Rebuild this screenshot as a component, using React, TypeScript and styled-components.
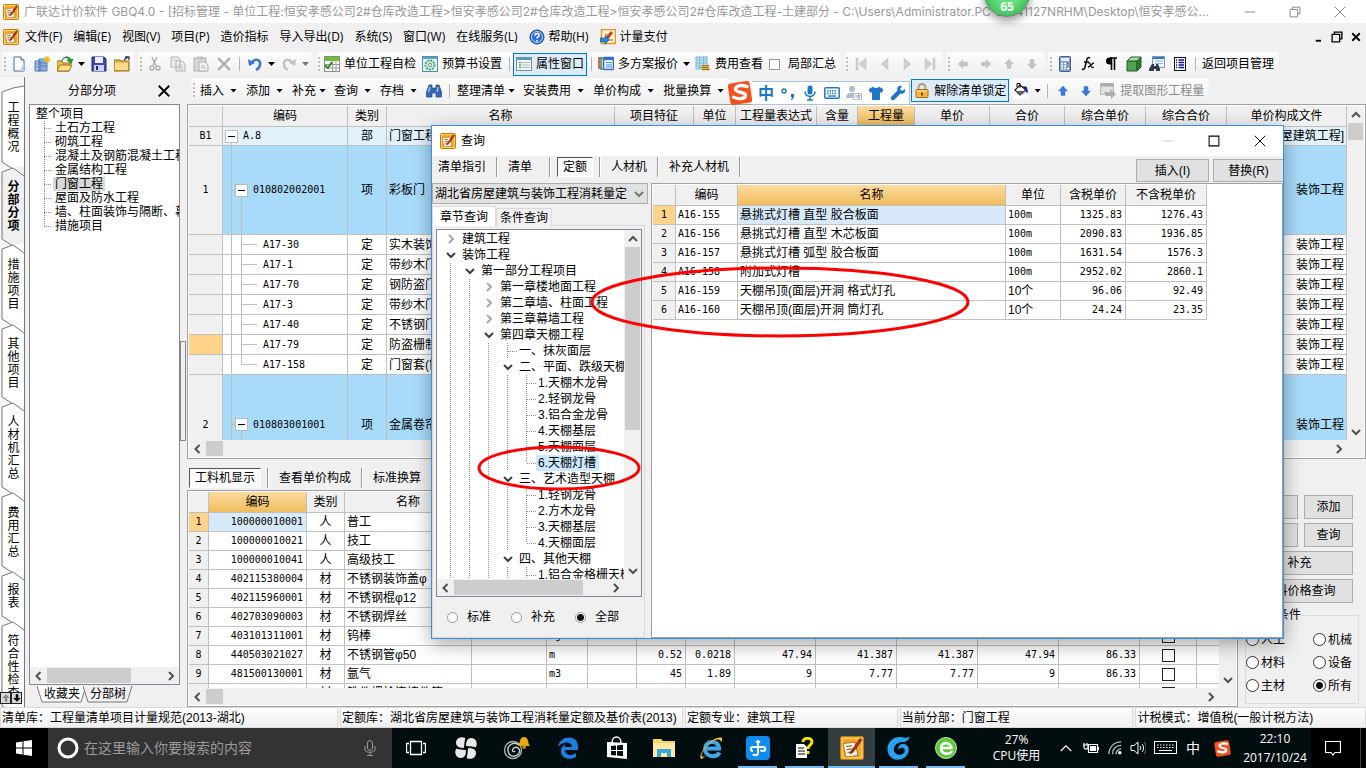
import React from "react";
import styled, { createGlobalStyle, css } from "styled-components";

const UI = '"Liberation Sans", "Noto Sans CJK SC", sans-serif';
const SYS = '"Open Sans", "Noto Sans CJK SC", sans-serif';
const MONO = '"DejaVu Sans Mono", "Noto Sans CJK SC", monospace';
const LINE = "#c0c0c0";
const FACE = "#f0f0f0";

const Global = createGlobalStyle`
  * { box-sizing: border-box; }
  body { margin: 0; overflow: hidden; background: ${FACE}; }
  button, input, select { font: inherit; color: inherit; margin: 0; padding: 0; }
  button { background: none; border: 0; white-space: nowrap; }
  svg { display: block; flex: none; }
`;

/* ---------- frame ---------- */
const Screen = styled.div`
  position: relative;
  display: flex;
  flex-direction: column;
  height: 100vh;
  min-height: 768px;
  overflow: hidden;
  background: ${FACE};
  color: #000;
  font: 12px/16px ${UI};
  white-space: nowrap;
`;
const TitleBar = styled.header`
  display: flex;
  align-items: center;
  height: 23px;
  padding: 0 20px 0 3px;
  background: #fff;
  color: #999;
  font-family: Inter, "Noto Sans CJK SC", sans-serif;
`;
const TitleText = styled.span`
  flex: 1;
  padding-left: 5px;
`;
const WindowButtons = styled.div<{ $gap: number }>`
  display: flex;
  align-items: center;
  gap: ${(p) => p.$gap}px;
`;
const MenuBar = styled.nav`
  display: flex;
  align-items: center;
  height: 28px;
  padding: 0 4px 0 3px;
  font-family: ${SYS};
`;
const MenuItem = styled.button`
  display: flex;
  align-items: center;
  gap: 4px;
  padding: 0 5px 0 6px;
`;
const Fill = styled.div`
  flex: 1;
`;

/* ---------- tool bars ---------- */
const ToolBar = styled.div`
  display: flex;
  align-items: center;
  gap: 3px;
  height: 26px;
  padding-left: 2px;
`;
const Group = styled.div`
  display: flex;
  align-items: center;
  height: 25px;
  padding-right: 2px;
  border-radius: 3px;
  background: linear-gradient(#fcfcfc, #efefef);
`;
const Grip = styled.span`
  width: 5px;
  height: 15px;
  background: repeating-linear-gradient(#bdbdbd 0 2px, transparent 2px 4px) center / 2px 100% no-repeat;
`;
const IconButton = styled.button`
  display: flex;
  justify-content: center;
  width: 23px;
`;
const TextButton = styled.button<{ $on?: boolean; $off?: boolean }>`
  display: flex;
  align-items: center;
  gap: 4px;
  height: 23px;
  padding: 0 3px;
  font-family: ${SYS};
  ${(p) => p.$on && css`background: #dcebf8; outline: 1px solid #0078d7; outline-offset: -1px;`}
  ${(p) => p.$off && css`color: #8a8a8a;`}
`;
const MenuButton = styled.button<{ $tight?: boolean }>`
  display: flex;
  align-items: center;
  justify-content: space-between;
  padding: 0 ${(p) => (p.$tight ? 4 : 5)}px 0 4px;
  gap: ${(p) => (p.$tight ? 3 : 6)}px;
  font-family: ${SYS};
`;
const Caret = styled.span`
  width: 7px;
  height: 4px;
  background: currentColor;
  clip-path: polygon(0 0, 100% 0, 50% 100%);
`;
const CaretButton = styled.button<{ $off?: boolean }>`
  display: flex;
  justify-content: center;
  width: 11px;
  color: ${(p) => (p.$off ? "#777" : "#000")};
`;
const Divider = styled.span`
  width: 8px;
  height: 14px;
  background: linear-gradient(#b5b5b5, #b5b5b5) center / 1px 100% no-repeat;
`;
const CheckLabel = styled.label`
  display: flex;
  align-items: center;
  gap: 8px;
  padding: 0 3px;
`;
const Check = styled.input.attrs({ type: "checkbox" })<{ $light?: boolean }>`
  appearance: none;
  width: ${(p) => (p.$light ? 11 : 13)}px;
  height: ${(p) => (p.$light ? 11 : 13)}px;
  border: 1px solid ${(p) => (p.$light ? "#999" : "#222")};
  background: #fff;
`;

/* ---------- left side ---------- */
const Workspace = styled.div`
  display: flex;
  flex: 1;
  min-height: 0;
`;
const SideTabs = styled.div`
  display: flex;
  flex-direction: column;
  width: 25px;
  padding-top: 11px;
  overflow: hidden;
  border-right: 1px solid #777;
  background: #f7f7f7;
`;
const SideTabButton = styled.button<{ $on?: boolean; $h: number }>`
  display: grid;
  flex: none;
  justify-items: center;
  align-items: center;
  height: ${(p) => p.$h}px;
  line-height: 13px;
  font-weight: ${(p) => (p.$on ? 700 : 400)};
  > * { grid-area: 1 / 1; }
  svg { overflow: visible; justify-self: start; }
`;
const SideTabText = styled.span`
  z-index: 1;
  width: 12px;
  margin-left: 3px;
  white-space: normal;
  word-break: break-all;
`;
const SideScroll = styled.div`
  position: absolute;
  left: 0;
  top: 692px;
  z-index: 2;
  display: flex;
  background: #d8d8d8;
`;
const SmallArrow = styled.button`
  display: flex;
  align-items: center;
  justify-content: center;
  width: 11px;
  height: 12px;
  outline: 1px solid #222;
  outline-offset: -1px;
`;
const LeftPanel = styled.aside`
  display: flex;
  flex-direction: column;
  width: 155px;
  padding-left: 4px;
`;
const PanelHead = styled.div`
  display: flex;
  align-items: center;
  height: 27px;
  padding: 0 10px 0 39px;
  justify-content: space-between;
`;
const SunkBox = styled.div`
  display: flex;
  flex-direction: column;
  flex: 1;
  min-height: 0;
  border: 1px solid #828790;
  background: #fff;
  overflow: hidden;
`;
const OutlineList = styled.ul`
  flex: 1;
  margin: 0;
  padding: 2px 0 0 6px;
  overflow: hidden;
  list-style: none;
  line-height: 14px;
`;
const OutlineItem = styled.li<{ $on?: boolean }>`
  display: flex;
  height: 14px;
  span { padding: 0 2px; margin-left: 1px; background: ${(p) => (p.$on ? "#d9d9d9" : "none")}; }
`;
const dotsV = "repeating-linear-gradient(#909090 0 1px, transparent 1px 2px)";
const dotsH = "repeating-linear-gradient(90deg, #909090 0 1px, transparent 1px 2px)";
const Branch = styled.i<{ $last?: boolean; $w: number }>`
  flex: none;
  width: ${(p) => p.$w}px;
  background:
    ${dotsV} center top / 1px ${(p) => (p.$last ? 50 : 100)}% no-repeat,
    ${dotsH} right center / 50% 1px no-repeat;
`;
const Guide = styled.i<{ $w: number }>`
  flex: none;
  width: ${(p) => p.$w}px;
  background: ${dotsV} center / 1px 100% no-repeat;
`;
const BottomTabs = styled.div`
  display: flex;
  height: 22px;
  padding-left: 8px;
`;
const BottomTab = styled.button`
  display: grid;
  height: 18px;
  margin-right: -4px;
  place-items: center;
  > * { grid-area: 1 / 1; }
`;
const Splitter = styled.div`
  display: flex;
  flex-direction: column;
  justify-content: center;
  width: 7px;
  padding-bottom: 2px;
`;
const SplitHandle = styled.span`
  width: 6px;
  height: 100px;
  border: 1px solid #828790;
`;

/* ---------- scroll bars ---------- */
const ScrollX = styled.div<{ $end?: number }>`
  display: flex;
  flex: none;
  align-items: center;
  height: 17px;
  padding-right: ${(p) => p.$end ?? 0}px;
  background: ${FACE};
`;
const ScrollY = styled.div<{ $end?: number }>`
  display: flex;
  flex: none;
  flex-direction: column;
  align-items: center;
  width: 17px;
  padding-bottom: ${(p) => p.$end ?? 0}px;
  background: ${FACE};
`;
const ArrowButton = styled.button`
  display: flex;
  flex: none;
  align-items: center;
  justify-content: center;
  width: 17px;
  height: 17px;
`;
const Thumb = styled.span<{ $w?: number; $h?: number }>`
  flex: none;
  width: ${(p) => p.$w ?? 15}px;
  height: ${(p) => p.$h ?? 15}px;
  background: #cdcdcd;
`;

/* ---------- grids ---------- */
const Content = styled.main`
  display: flex;
  flex: 1;
  flex-direction: column;
  min-width: 0;
`;
const GridFrame = styled.section<{ $grow?: boolean }>`
  display: flex;
  flex: ${(p) => (p.$grow ? 1 : "none")};
  flex-direction: column;
  min-width: 0;
  min-height: 0;
  padding: 1px;
  border: 1px solid #a0a0a0;
  background: #fff;
`;
const GridRow = styled.div`
  display: flex;
  flex: 1;
  min-height: 0;
`;
const Viewport = styled.div<{ $h?: number }>`
  flex: 1;
  min-width: 0;
  height: ${(p) => (p.$h ? p.$h + "px" : "auto")};
  overflow: hidden;
`;
/* With $auto the fixed layout lets the columns alone set the width. */
const Table = styled.table<{ $auto?: boolean }>`
  width: ${(p) => (p.$auto ? "1px" : "100%")};
  table-layout: fixed;
  border-collapse: separate;
  border-spacing: 0;
`;
const Th = styled.th<{ $on?: boolean }>`
  height: 21px;
  padding: 0;
  overflow: hidden;
  border: solid ${LINE};
  border-width: 0 1px 1px 0;
  background: ${(p) => (p.$on ? "linear-gradient(#fbdba0, #f0bd5c)" : FACE)};
  font-weight: 400;
`;
const Tr = styled.tr<{ $h: number; $bg?: string }>`
  background: ${(p) => p.$bg ?? "#fff"};
  td { height: ${(p) => p.$h}px; }
`;
const Td = styled.td<{ $align?: string; $mono?: boolean; $bg?: string }>`
  padding: 0 2px;
  overflow: hidden;
  border: solid ${LINE};
  border-width: 0 1px 1px 0;
  background: ${(p) => p.$bg ?? "none"};
  text-align: ${(p) => p.$align ?? "left"};
  ${(p) => p.$mono && css`font: 10px/16px ${MONO};`}
  ${(p) => p.$mono && p.$align === "right" && css`padding-right: 3px;`}
  input { display: block; margin: 0 auto; }
`;
const TreeCell = styled.div<{ $h: number }>`
  display: flex;
  align-items: center;
  height: ${(p) => p.$h}px;
  padding-left: 1px;
  font: 10px/16px ${MONO};
`;
const lineBg = `linear-gradient(${LINE}, ${LINE})`;
const GridGuide = styled.i<{ $kind: "line" | "node" | "child" | "last" }>`
  display: flex;
  align-items: center;
  justify-content: center;
  flex: none;
  align-self: stretch;
  width: 10px;
  background: ${(p) =>
    p.$kind === "line"
      ? `${lineBg} center / 1px 100% no-repeat`
      : p.$kind === "node"
      ? `${lineBg} center bottom / 1px 50% no-repeat`
      : `${lineBg} center top / 1px ${p.$kind === "last" ? 50 : 100}% no-repeat, ${lineBg} right center / 5px 1px no-repeat`};
`;
const Dash = styled.i`
  width: 11px;
  height: 1px;
  margin-right: 6px;
  background: ${LINE};
`;
const Minus = styled.button`
  display: grid;
  flex: none;
  place-items: center;
  width: 13px;
  height: 13px;
  border: 1px solid #bbb;
  background: #fff;
  &::after { content: ""; width: 7px; height: 1px; background: #000; }
`;
const NodeText = styled.span`
  padding-left: 7px;
`;

/* ---------- lower area ---------- */
const Lower = styled.div`
  display: flex;
  flex: 1;
  min-height: 0;
`;
const LowerLeft = styled.div`
  display: flex;
  flex: 1;
  flex-direction: column;
  min-width: 0;
`;
const TabStrip = styled.div<{ $top: number; $h: number }>`
  display: flex;
  align-items: center;
  flex: none;
  height: ${(p) => p.$h}px;
  padding: ${(p) => p.$top}px 0 0 6px;
`;
const StripTab = styled.button<{ $on?: boolean; $w?: number }>`
  min-width: ${(p) => p.$w ?? 0}px;
  height: 20px;
  text-align: left;
  ${(p) =>
    p.$on &&
    css`
      margin: 0 -4px;
      padding: 0 5px;
      border: 1px solid;
      border-color: #555 #fff #fff #555;
      background: #fafafa;
    `}
`;
const StripLine = styled.span`
  width: 2px;
  height: 20px;
  margin: 0 10px;
  border-left: 1px solid #999;
  border-right: 1px solid #fff;
`;
const RightPanel = styled.aside`
  display: grid;
  grid-template-columns: 52px 49px;
  grid-auto-rows: 24px;
  gap: 4px 6px;
  align-content: start;
  width: 128px;
  padding: 36px 8px 0 8px;
`;
const PushButton = styled.button<{ $wide?: boolean }>`
  height: 24px;
  border: 1px solid #adadad;
  background: #e1e1e1;
  ${(p) => p.$wide && css`grid-column: 1 / -1;`}
`;
const FilterBox = styled.fieldset`
  grid-column: 1 / -1;
  display: grid;
  grid-template-columns: 67px 42px;
  grid-auto-rows: 23px;
  align-items: center;
  width: 114px;
  height: 97px;
  margin: 0 0 0 -1px;
  padding: 5px 0 0 0;
  border: 1px solid #dcdcdc;
  legend { margin-left: 7px; padding: 0; }
`;
const RadioLabel = styled.label`
  display: flex;
  align-items: center;
  gap: 2px;
`;
const Radio = styled.input.attrs({ type: "radio" })<{ $soft?: boolean }>`
  appearance: none;
  flex: none;
  width: ${(p) => (p.$soft ? 11 : 13)}px;
  height: ${(p) => (p.$soft ? 11 : 13)}px;
  border: 1px solid ${(p) => (p.$soft ? "#999" : "#333")};
  border-radius: 50%;
  background: #fff;
  &:checked { background: radial-gradient(circle, #111 0 3px, #fff 4px); }
`;

/* ---------- status bar ---------- */
const StatusBar = styled.footer`
  display: flex;
  gap: 2px;
  height: 21px;
`;
const StatusCell = styled.span<{ $grow: number }>`
  flex: ${(p) => p.$grow} 1 0;
  overflow: hidden;
  padding: 2px 1px 0;
  border: 1px solid #dadada;
  background: linear-gradient(#fff, #efefef);
`;

/* ---------- query dialog ---------- */
const Dialog = styled.section`
  position: absolute;
  left: 431px;
  top: 125px;
  display: flex;
  flex-direction: column;
  width: 853px;
  height: 514px;
  border: 1px solid #3a8ee6;
  background: ${FACE};
  box-shadow: 0 5px 18px rgba(0, 0, 0, 0.35);
`;
const DialogTitle = styled.header`
  display: flex;
  align-items: center;
  justify-content: space-between;
  height: 30px;
  padding: 0 17px 0 8px;
  background: #fff;
  font-family: ${SYS};
`;
const TitleLabel = styled.span`
  display: flex;
  align-items: center;
  gap: 5px;
`;
const DialogBar = styled.div`
  display: flex;
  height: 27px;
`;
const DialogButtons = styled.div`
  display: flex;
  gap: 4px;
  margin-left: auto;
  padding-top: 3px;
  button { width: 73px; height: 23px; }
  button:last-child { width: 70px; border-right: 0; }
`;
const DialogBody = styled.div`
  display: flex;
  flex: 1;
  gap: 3px;
  min-height: 0;
`;
const QuerySide = styled.div`
  display: flex;
  flex-direction: column;
  width: 216px;
`;
const Combo = styled.label`
  display: grid;
  align-items: center;
  height: 21px;
  > * { grid-area: 1 / 1; }
  svg { justify-self: end; margin-right: 4px; pointer-events: none; }
`;
const ComboSelect = styled.select`
  appearance: none;
  width: 100%;
  height: 21px;
  padding: 0 18px 0 2px;
  border: 1px solid #adadad;
  border-radius: 0;
  background: #e1e1e1;
`;
const PageTabs = styled.div`
  display: flex;
  align-items: flex-end;
  height: 22px;
  margin-bottom: -1px;
`;
const PageTab = styled.button<{ $on?: boolean }>`
  z-index: ${(p) => (p.$on ? 1 : 0)};
  width: ${(p) => (p.$on ? 64 : 56)}px;
  height: ${(p) => (p.$on ? 20 : 18)}px;
  border: 1px solid #dadada;
  border-bottom: 0;
  background: ${(p) => (p.$on ? "#fff" : FACE)};
`;
const Page = styled.div`
  display: flex;
  flex: 1;
  flex-direction: column;
  width: 213px;
  min-height: 0;
  padding: 3px 2px 0 3px;
  border: 1px solid #dadada;
`;
const TreeList = styled.ul`
  flex: 1;
  margin: 0;
  padding: 1px 0 0 4px;
  overflow: hidden;
  list-style: none;
`;
const TreeRow = styled.li<{ $on?: boolean }>`
  display: flex;
  height: 16px;
  span { padding: 0 3px 0 2px; background: ${(p) => (p.$on ? "#cce8ff" : "none")}; }
`;
const Toggle = styled.button`
  display: flex;
  flex: none;
  align-items: center;
  justify-content: center;
  width: 19px;
`;
const RadioRow = styled.div`
  display: flex;
  flex: none;
  align-items: center;
  gap: 20px;
  height: 40px;
  padding-left: 11px;
  label { gap: 9px; }
`;

/* ---------- overlays ---------- */
const Marks = styled.svg`
  position: absolute;
  left: 0;
  top: 0;
  pointer-events: none;
`;
const Ball = styled.div`
  position: absolute;
  left: 984px;
  top: -29px;
  display: flex;
  align-items: flex-end;
  justify-content: center;
  width: 46px;
  height: 46px;
  padding-bottom: 1px;
  border: 1px solid #6f7f72;
  border-radius: 50%;
  background: radial-gradient(circle, #63dd78 40%, #2fae50 90%);
  box-shadow: 0 4px 8px rgba(0, 0, 0, 0.4);
  color: #fff;
  font: 700 12px/16px "Open Sans", sans-serif;
`;
const ImeBar = styled.div`
  position: absolute;
  left: 726px;
  top: 79px;
  display: flex;
  align-items: center;
`;
const ImeKeys = styled.div`
  display: flex;
  align-items: center;
  height: 24px;
  margin-left: -2px;
  padding: 0 0 0 3px;
  border: 1px solid #a9c3dd;
  border-left: 0;
  background: #fff;
  color: #1e76c8;
  button { display: flex; justify-content: center; width: 22px; font: 700 16px/20px ${SYS}; }
`;

/* ---------- task bar ---------- */
const TaskBar = styled.footer`
  display: flex;
  flex: none;
  height: 40px;
  background: #020d10;
  color: #fff;
  font-family: ${SYS};
`;
const StartButton = styled.button`
  display: flex;
  align-items: center;
  justify-content: center;
  width: 48px;
  background: #000;
`;
const SearchBox = styled.label`
  display: flex;
  align-items: center;
  width: 344px;
  padding: 0 14px 0 9px;
  background: #333;
`;
const SearchInput = styled.input`
  flex: 1;
  min-width: 0;
  margin-left: 5px;
  border: 0;
  background: none;
  font-size: 14px;
  &::placeholder { color: #9a9a9a; opacity: 1; }
`;
const TaskButton = styled.button<{ $w: number; $open?: boolean; $active?: boolean }>`
  display: flex;
  align-items: center;
  justify-content: center;
  width: ${(p) => p.$w}px;
  background: ${(p) => (p.$active ? "#343e40" : "none")};
  ${(p) => p.$open && css`box-shadow: inset 0 -2px 0 #76b9ed;`}
  ${(p) => p.$open && !p.$active && css`clip-path: inset(0 4px);`}
`;
const CpuMeter = styled.div`
  flex: 1;
  padding: 4px 0 0 10px;
  text-align: center;
`;
const TrayButton = styled.button<{ $w: number }>`
  display: flex;
  align-items: center;
  justify-content: center;
  width: ${(p) => p.$w}px;
  font-size: 14px;
`;
const Clock = styled.div`
  width: 72px;
  padding-top: 1px;
  text-align: center;
  line-height: 19px;
`;
const TrayEnd = styled.div`
  display: flex;
  width: 55px;
  background: linear-gradient(90deg, #000 49px, #444 49px, #444 50px, #000 50px);
`;

/* ---------- icons ---------- */
type IcoProps = { s?: number; children: React.ReactNode };
const Ico = ({ s = 16, children }: IcoProps) => (
  <svg width={s} height={s} viewBox="0 0 16 16" fill="none" aria-hidden="true">
    {children}
  </svg>
);
const AppIcon = ({ s = 16 }: { s?: number }) => (
  <Ico s={s}>
    <rect x="0.5" y="0.5" width="15" height="15" rx="1" fill="#f5a623" stroke="#c77a10" />
    <rect x="1.5" y="1.5" width="13" height="13" stroke="#ffd56a" />
    <path d="M2 5l8-1 2 9-8 1z" fill="#fff8e6" stroke="#a8641a" strokeWidth="0.6" />
    <path d="M4 7l4-.5M4.500 9l4-.5M5 11l3-.5" stroke="#8a4a10" strokeWidth="0.8" />
    <path d="M13.500 1.500l-6 8.500-.8 2 2-1.200 5.800-8z" fill="#b5321c" stroke="#5e1a0c" strokeWidth="0.5" />
  </Ico>
);
const Chev = ({ d, c = "#505050" }: { d: "l" | "r" | "u" | "d"; c?: string }) => {
  const paths = { l: "M6.500 1L2.500 5l4 4", r: "M3 1l4 4-4 4", u: "M1 7l4-4 4 4", d: "M1 3l4 4 4-4" };
  return (
    <svg width="10" height="10" viewBox="0 0 10 10" fill="none" aria-hidden="true">
      <path d={paths[d]} stroke={c} strokeWidth="2" />
    </svg>
  );
};
const NewIcon = () => (
  <Ico>
    <path d="M3 1h7l3 3v11H3z" fill="#fff" stroke="#4a6a94" />
    <path d="M9 15h4V6z" fill="#b9cdea" />
    <path d="M10 1v3h3" stroke="#4a6a94" fill="#dbe7f7" />
  </Ico>
);
const BuildingIcon = () => (
  <Ico>
    <path d="M1 5h5v10H1zM5 3h8v12H5z" fill="#a9c8ee" stroke="#4d77b3" />
    <path d="M7 4v11M9 4v11M11 4v11M5 7h8M5 10h8M1 8h4M1 11h4" stroke="#4d77b3" strokeWidth="0.7" />
    <path d="M13 0v7M9.500 3.500h7M10.500 1l5 5M15.500 1l-5 5" stroke="#f2b705" strokeWidth="1.200" />
  </Ico>
);
const OpenIcon = () => (
  <Ico>
    <path d="M0 5h5l1 2h6v8H0z" fill="#f0c04a" stroke="#9a6d12" />
    <path d="M3 9h12l-3 6H0z" fill="#ffe08a" stroke="#9a6d12" />
    <path d="M5 5c1-4 6-4 7-1l-2 0 4 4 2-5-2 .500C12-.5 6 0 5 5z" fill="#23a33a" stroke="#12702a" strokeWidth="0.600" />
  </Ico>
);
const SaveIcon = () => (
  <Ico>
    <path d="M1 1h12l2 2v12H1z" fill="#3f49b8" stroke="#232b80" />
    <rect x="4" y="1" width="8" height="6" fill="#eef0fb" />
    <rect x="3" y="9" width="10" height="6" fill="#cfd4f3" />
    <path d="M5 10h2v4H5z" fill="#232b80" />
  </Ico>
);
const FolderIcon = () => (
  <Ico>
    <path d="M0 4h6l1 1h8v10H0z" fill="#e9b74b" stroke="#8f6a1d" />
    <path d="M1 7h13v7H1z" fill="#fbdc8c" />
    <path d="M10 4l4-3m-3 0h4v3" stroke="#23395c" strokeWidth="1.300" />
  </Ico>
);
const CutIcon = () => (
  <Ico>
    <path d="M5 1l4 9M10 1L6 9" stroke="#b0b0b0" strokeWidth="1.500" />
    <circle cx="5" cy="12" r="2" stroke="#b0b0b0" strokeWidth="1.500" />
    <circle cx="11" cy="12" r="2" stroke="#b0b0b0" strokeWidth="1.500" />
  </Ico>
);
const CopyIcon = () => (
  <Ico>
    <path d="M1 1h7l2 2v8H1zM6 5h6l3 3v7H6z" fill="#eee" stroke="#b0b0b0" />
    <path d="M8 9h4M8 11h5M8 13h5M3 4h4" stroke="#c0c0c0" />
  </Ico>
);
const PasteIcon = () => (
  <Ico>
    <rect x="1" y="2" width="12" height="13" fill="#d6d6d6" stroke="#b0b0b0" />
    <rect x="4" y="0.500" width="6" height="3" fill="#c0c0c0" />
    <path d="M6 6h6l3 3v6H6z" fill="#f2f2f2" stroke="#b0b0b0" />
    <path d="M8 10h4M8 12h5" stroke="#c0c0c0" />
  </Ico>
);
const CrossIcon = ({ c = "#a8a8a8", w = 2 }: { c?: string; w?: number }) => (
  <Ico>
    <path d="M2 2l12 12M14 2L2 14" stroke={c} strokeWidth={w} />
  </Ico>
);
const UndoIcon = ({ c = "#3c74cf", flip = false }: { c?: string; flip?: boolean }) => (
  <Ico>
    <g transform={flip ? "translate(16 0) scale(-1 1)" : undefined}>
      <path d="M5 6c4-4 9-2 8 3-.500 3-2 4-4 5" stroke={c} strokeWidth="2.500" />
      <path d="M1 3l1 7 6-3z" fill={c} />
    </g>
  </Ico>
);
const TableIcon = () => (
  <Ico>
    <rect x="0.500" y="0.500" width="15" height="15" fill="#fff" stroke="#8c8c8c" />
    <path d="M1 1h14v4H1z" fill="#6fbf2f" />
    <path d="M1 8.500h14M1 12h14M8.500 5v10M12 5v10" stroke="#9a9a9a" />
    <path d="M1 9l3 3 4-6" stroke="#2e8b1a" strokeWidth="2" />
  </Ico>
);
const BudgetIcon = () => (
  <Ico>
    <rect x="0.500" y="0.500" width="15" height="15" fill="#dff0f7" stroke="#4f8fae" />
    <path d="M1 1h14v2H1z" fill="#5fa3c4" />
    <circle cx="8" cy="9" r="4.500" stroke="#56a765" strokeWidth="2" strokeDasharray="2 1" />
    <circle cx="8" cy="9" r="1.800" stroke="#56a765" />
  </Ico>
);
const PanelIcon = () => (
  <Ico>
    <rect x="0.500" y="1.500" width="15" height="13" fill="#f4faf8" stroke="#7b8c98" />
    <path d="M1 2h14v2H1z" fill="#49a3b8" />
    <path d="M3 6.500h2M3 9h2M3 11.500h2" stroke="#4caf50" strokeWidth="1.500" />
    <path d="M6 6.500h8M6 9h8M6 11.500h8" stroke="#a9b6b3" />
  </Ico>
);
const PlansIcon = () => (
  <Ico>
    <path d="M3 2H1v10h2" stroke="#d33" strokeWidth="1.500" />
    <path d="M5 2H3v11h2" stroke="#2b9e3b" strokeWidth="1.500" />
    <rect x="5.500" y="1.500" width="10" height="12" rx="1" fill="#e8f1ff" stroke="#2f6fd0" strokeWidth="1.500" />
    <path d="M6 3h9" stroke="#2f6fd0" strokeWidth="2" />
    <path d="M8 6.500h6M8 9h6M8 11h6" stroke="#5f8ed6" />
  </Ico>
);
const FeeIcon = () => (
  <Ico>
    <rect x="1" y="1" width="11" height="12" fill="#bfe3f2" stroke="#79b4cf" />
    <path d="M1 4h11M1 7h11M1 10h11M4.500 1v12M8.500 1v12" stroke="#6fb3c9" strokeWidth="0.800" />
    <path d="M7 9h7v5.500H7z" fill="#dfb04e" />
    <path d="M7 9.500h7M6 11.500h8M7 13.500h8" stroke="#a87a1e" />
  </Ico>
);
const NavIcon = ({ d }: { d: string }) => (
  <Ico>
    <path d={d} fill="#cfcfcf" stroke="#c2c2c2" strokeWidth="0.500" />
  </Ico>
);
const ArrowIcon = ({ r, c = "#c4c4c4" }: { r: number; c?: string }) => (
  <Ico>
    <path transform={`rotate(${r} 8 8)`} d="M8 3l4.500 5H10v4.500H6V8H3.500z" fill={c} stroke={c} strokeWidth="0.500" />
  </Ico>
);
const CalcIcon = () => (
  <Ico>
    <rect x="2.500" y="0.500" width="11" height="15" rx="1" fill="#7aa2d8" stroke="#3f5f8f" />
    <rect x="4" y="2" width="8" height="3" fill="#e5f0fb" />
    <path d="M4 7.500h8M4 10h8M4 12.500h8" stroke="#fff" strokeWidth="1.500" strokeDasharray="2 1" />
    <path d="M10 7.500h2M10 10h2" stroke="#d44" strokeWidth="1.500" />
  </Ico>
);
const FxIcon = () => (
  <Ico>
    <path d="M10 2c-2-1-3 0-3.500 3L5 11c-.5 2-1.500 3-3 2M4 6h5" stroke="#111" strokeWidth="1.600" />
    <path d="M8 7c2-1 2 1 3 3s1 2 3 1M14 7c-2 0-4 4-6 4" stroke="#111" strokeWidth="1.300" />
  </Ico>
);
const PilcrowIcon = () => (
  <Ico>
    <path d="M7 2h7M8.500 2v12M11.500 2v12" stroke="#000" strokeWidth="1.600" />
    <path d="M9 1.500H6.500a3.500 3.500 0 000 7H9z" fill="#000" />
  </Ico>
);
const CubeIcon = () => (
  <Ico>
    <path d="M1 5h10v10H1z" fill="#4fa24f" stroke="#1e5f27" />
    <path d="M1 5l4-4h10l-4 4z" fill="#a6dba0" stroke="#1e5f27" />
    <path d="M11 5l4-4v10l-4 4z" fill="#2c7a36" stroke="#1e5f27" />
  </Ico>
);
const FindTableIcon = () => (
  <Ico>
    <rect x="3.500" y="0.500" width="12" height="11" fill="#eef4fc" stroke="#7c9cc8" />
    <path d="M4 2h11" stroke="#3f73c0" strokeWidth="2" />
    <path d="M6 5h8M6 7.500h8" stroke="#9bb4d4" />
    <path d="M3 8h2v2h2V8h2l2 5v2H7v-2H5v2H0v-2z" fill="#2f3947" />
  </Ico>
);
const ListIcon = () => (
  <Ico>
    <rect x="2.500" y="1.500" width="11" height="13" fill="#fff" stroke="#111" />
    <path d="M4 4h1M4 6.500h1M4 9h1M4 11.500h1M6.500 4H12M6.500 6.500H12M6.500 9H12M6.500 11.500H12" stroke="#12128a" strokeWidth="1.400" />
  </Ico>
);
const Binoculars = () => (
  <Ico>
    <path d="M3 2h3v3h4V2h3l2.500 7v5H10v-4H6v4H.500V9z" fill="#3768b8" stroke="#1f4484" strokeWidth="0.700" />
    <path d="M2.500 9l1.500-5M11 9l1-5" stroke="#a9c7f2" strokeWidth="1.300" />
  </Ico>
);
const LockIcon = () => (
  <Ico>
    <path d="M4.500 7V4.500a3.500 3.500 0 017 0V7" stroke="#b5a06b" strokeWidth="2" />
    <rect x="2" y="6.500" width="12" height="8" rx="1" fill="#f4b63d" stroke="#a86d12" />
    <path d="M2.500 8h11" stroke="#ffe29a" />
    <path d="M8 9.500v3" stroke="#7a4a08" strokeWidth="2" />
  </Ico>
);
const BucketIcon = () => (
  <Ico>
    <rect x="0" y="12" width="16" height="4" fill="#fff" />
    <path d="M7 2l6 5-6 5-5-5z" fill="#fff" stroke="#111" strokeWidth="1.200" />
    <path d="M4 4V.5h3V5" stroke="#111" />
    <path d="M3 8h9l-5 4z" fill="#666" />
    <path d="M10 3l4 1 1 6-2-1z" fill="#14248a" />
  </Ico>
);
const ExtractIcon = () => (
  <Ico>
    <rect x="0.500" y="0.500" width="13" height="11" fill="#e2e2e2" stroke="#b5b5b5" />
    <path d="M1 2h12" stroke="#aaa" strokeWidth="3" />
    <path d="M4 9h6V6l6 5-5 5v-3H6z" fill="#adadad" />
  </Ico>
);
const HelpIcon = () => (
  <Ico>
    <circle cx="8" cy="8" r="7" fill="#2f6fd6" stroke="#1c478f" />
    <circle cx="8" cy="8" r="5.500" stroke="#bcd4f6" />
    <path d="M6 6.500c0-3 4.500-2.500 4 0-.3 1.300-2 1.300-2 3M8 11v1.500" stroke="#fff" strokeWidth="1.600" />
  </Ico>
);
const PayIcon = () => (
  <Ico>
    <rect x="1.500" y="0.500" width="14" height="14" fill="#fff3d8" stroke="#e59a1c" strokeWidth="1.500" />
    <path d="M4 10l7-8 2 2-6 8z" fill="#c2402a" />
    <path d="M5 5l4 2M9 11h4" stroke="#8a5a1a" />
    <path d="M0 9h5V6.500l4 4.500-4 4.500V13H0z" fill="#2c84cf" stroke="#135a99" strokeWidth="0.600" />
  </Ico>
);
const MinIcon = ({ c }: { c: string }) => (
  <Ico s={12}>
    <path d="M1 8h14" stroke={c} strokeWidth="1.300" />
  </Ico>
);
const RestoreIcon = ({ c, w = 1.3 }: { c: string; w?: number }) => (
  <Ico s={12}>
    <path d="M4.500 4V1.500h10v9H12M1.500 4.500h10v10h-10z" stroke={c} strokeWidth={w} />
  </Ico>
);
const CloseIcon = ({ c, w = 1.3 }: { c: string; w?: number }) => (
  <Ico s={12}>
    <path d="M1 1l14 14M15 1L1 15" stroke={c} strokeWidth={w} />
  </Ico>
);
const SogouIcon = ({ s }: { s: number }) => (
  <svg width={s} height={s} viewBox="0 0 28 28" fill="none" aria-hidden="true">
    <rect x="3" y="3" width="22" height="22" rx="3" transform="rotate(-9 14 14)" fill="#f4511e" />
    <path d="M21 7.500c-5-2-11-1-11.500 2.500-.5 4 10 2.500 10 6.500 0 3.500-7 4-12 1.800" stroke="#fff" strokeWidth="3.400" strokeLinecap="round" />
  </svg>
);

/* ---------- data ---------- */
const menus = ["文件(F)", "编辑(E)", "视图(V)", "项目(P)", "造价指标", "导入导出(D)", "系统(S)", "窗口(W)", "在线服务(L)"];
const sideTabs: [string, number][] = [
  ["工程概况", 80], ["分部分项", 77], ["措施项目", 80], ["其他项目", 78],
  ["人材机汇总", 90], ["费用汇总", 79], ["报表", 50], ["符合性检查", 90],
];
const outline = ["土石方工程", "砌筑工程", "混凝土及钢筋混凝土工程", "金属结构工程", "门窗工程", "屋面及防水工程", "墙、柱面装饰与隔断、幕墙", "措施项目"];
const mainHeads: [string, number | undefined][] = [
  ["", 34], ["编码", 125], ["类别", 39], ["名称", undefined], ["项目特征", 79], ["单位", 42], ["工程量表达式", 81],
  ["含量", 41], ["工程量", 57], ["单价", 75], ["合价", 75], ["综合单价", 81], ["综合合价", 81], ["单价构成文件", 120],
];
const quotaRows = [
  ["A17-30", "实木装饰门"], ["A17-1", "带纱木门"], ["A17-70", "钢防盗门"], ["A17-3", "带纱木门"],
  ["A17-40", "不锈钢门"], ["A17-79", "防盗栅制作"], ["A17-158", "门窗套(筒子板)"],
];
const resourceCols = [20, 98, 38, 127, 75, 41, 49, 49, 49, 81, 81, 81, 81, 81, 57, 24];
const resourceHeads = ["", "编码", "类别", "名称"];
const resources = [
  ["100000010001", "人", "普工"], ["100000010021", "人", "技工"], ["100000010041", "人", "高级技工"],
  ["402115380004", "材", "不锈钢装饰盖φ"], ["402115960001", "材", "不锈钢棍φ12"], ["402703090003", "材", "不锈钢焊丝"],
  ["403101311001", "材", "钨棒", "kg"],
  ["440503021027", "材", "不锈钢管φ50", "m", "0.52", "0.0218", "47.94", "41.387", "41.387", "47.94", "86.33"],
  ["481500130001", "材", "氩气", "m3", "45", "1.89", "9", "7.77", "7.77", "9", "86.33"],
  ["", "材", "铁件螺栓连接件等"],
];
type Node = [level: number, kind: "closed" | "open" | "leaf" | "last", text: string];
const chapters: Node[] = [
  [0, "closed", "建筑工程"], [0, "open", "装饰工程"], [1, "open", "第一部分工程项目"], [2, "closed", "第一章楼地面工程"],
  [2, "closed", "第二章墙、柱面工程"], [2, "closed", "第三章幕墙工程"], [2, "open", "第四章天棚工程"], [3, "leaf", "一、抹灰面层"],
  [3, "open", "二、平面、跌级天棚"], [4, "leaf", "1.天棚木龙骨"], [4, "leaf", "2.轻钢龙骨"], [4, "leaf", "3.铝合金龙骨"],
  [4, "leaf", "4.天棚基层"], [4, "leaf", "5.天棚面层"], [4, "last", "6.天棚灯槽"], [3, "open", "三、艺术造型天棚"],
  [4, "leaf", "1.轻钢龙骨"], [4, "leaf", "2.方木龙骨"], [4, "leaf", "3.天棚基层"], [4, "last", "4.天棚面层"],
  [3, "open", "四、其他天棚"], [4, "leaf", "1.铝合金格栅天棚"],
];
const quotaHeads: [string, number][] = [["", 23], ["编码", 62], ["名称", 268], ["单位", 55], ["含税单价", 65], ["不含税单价", 81]];
const quotas = [
  ["A16-155", "悬挑式灯槽 直型 胶合板面", "100m", "1325.83", "1276.43"],
  ["A16-156", "悬挑式灯槽 直型 木芯板面", "100m", "2090.83", "1936.85"],
  ["A16-157", "悬挑式灯槽 弧型 胶合板面", "100m", "1631.54", "1576.3"],
  ["A16-158", "附加式灯槽", "100m", "2952.02", "2860.1"],
  ["A16-159", "天棚吊顶(面层)开洞 格式灯孔", "10个", "96.06", "92.49"],
  ["A16-160", "天棚吊顶(面层)开洞 筒灯孔", "10个", "24.24", "23.35"],
];
const statuses: [string, number][] = [
  ["清单库：工程量清单项目计量规范(2013-湖北)", 339], ["定额库：湖北省房屋建筑与装饰工程消耗量定额及基价表(2013)", 344],
  ["定额专业：建筑工程", 212], ["当前分部：门窗工程", 233], ["计税模式：增值税(一般计税方法)", 230],
];

/* ---------- parts ---------- */
const Tool = ({ label, children }: { label: string; children: React.ReactNode }) => (
  <IconButton aria-label={label}>{children}</IconButton>
);

const SideTab = ({ text, h, on }: { text: string; h: number; on: boolean }) => (
  <SideTabButton $h={h} $on={on}>
    <svg width="24" height={h} fill="none" aria-hidden="true">
      <path d={`M24 -2L13 0L2 4V${h - 6}L24 ${h + 8}Z`} fill={on ? FACE : "#fff"} />
      <path d={`M24 ${text === "工程概况" ? -2 : 8}L13 0L2 4V${h - 6}L24 ${h + 8}`} stroke="#777" />
    </svg>
    <SideTabText>{text}</SideTabText>
  </SideTabButton>
);

const LeftSide = () => (
  <>
    <SideTabs>
      {sideTabs.map(([t, h], i) => (
        <SideTab key={t} text={t} h={h} on={i === 1} />
      ))}
    </SideTabs>
    <LeftPanel>
      <PanelHead>
        <span>分部分项</span>
        <button aria-label="关闭">
          <CloseIcon c="#000" w={2.4} />
        </button>
      </PanelHead>
      <SunkBox>
        <OutlineList>
          <OutlineItem>整个项目</OutlineItem>
          {outline.map((t, i) => (
            <OutlineItem key={t} $on={i === 4}>
              <Branch $w={16} $last={i === outline.length - 1} />
              <span>{t}</span>
            </OutlineItem>
          ))}
        </OutlineList>
        <ScrollX>
          <ArrowButton aria-label="左"><Chev d="l" /></ArrowButton>
          <Thumb $w={84} />
          <Fill />
          <ArrowButton aria-label="右"><Chev d="r" /></ArrowButton>
        </ScrollX>
      </SunkBox>
      <BottomTabs>
        <BottomTab>
          <svg width="50" height="17" fill="#fff" aria-hidden="true"><path d="M0 0L5 16H44L49 0" stroke="#777" /></svg>
          <span>收藏夹</span>
        </BottomTab>
        <BottomTab>
          <svg width="50" height="17" fill={FACE} aria-hidden="true"><path d="M0 0L5 16H44L49 0" stroke="#777" /></svg>
          <span>分部树</span>
        </BottomTab>
      </BottomTabs>
    </LeftPanel>
    <Splitter><SplitHandle /></Splitter>
  </>
);

const MainGrid = () => (
  <GridFrame>
    <GridRow>
      <Viewport $h={334}>
        <Table>
          <colgroup>{mainHeads.map(([t, w]) => <col key={t} width={w} />)}</colgroup>
          <thead>
            <tr>{mainHeads.map(([t]) => <Th key={t} $on={t === "工程量"}>{t}</Th>)}</tr>
          </thead>
          <tbody>
            <Tr $h={19} $bg="#e1f2fd">
              <Td $mono $align="center" $bg={FACE}>B1</Td>
              <Td>
                <TreeCell $h={18}>
                  <GridGuide $kind="node"><Minus aria-label="折叠" /></GridGuide>
                  <NodeText>A.8</NodeText>
                </TreeCell>
              </Td>
              <Td $align="center">部</Td>
              <Td>门窗工程</Td>
              {mainHeads.slice(4, 13).map(([t]) => <Td key={t} />)}
              <Td $align="right">[房屋建筑工程]</Td>
            </Tr>
            <Tr $h={89} $bg="#a8dbfa">
              <Td $mono $align="center" $bg={FACE}>1</Td>
              <Td>
                <TreeCell $h={88}>
                  <GridGuide $kind="child" />
                  <GridGuide $kind="node"><Minus aria-label="折叠" /></GridGuide>
                  <NodeText>010802002001</NodeText>
                </TreeCell>
              </Td>
              <Td $align="center">项</Td>
              <Td>彩板门</Td>
              {mainHeads.slice(4, 13).map(([t]) => <Td key={t} />)}
              <Td $align="right">装饰工程</Td>
            </Tr>
            {quotaRows.map(([code, name], i) => (
              <Tr key={code} $h={20}>
                <Td $bg={i === 5 ? "#ffd38a" : FACE} />
                <Td>
                  <TreeCell $h={19}>
                    <GridGuide $kind="line" />
                    <GridGuide $kind={i === 6 ? "last" : "child"} />
                    <Dash />
                    <span>{code}</span>
                  </TreeCell>
                </Td>
                <Td $align="center">定</Td>
                <Td>{name}</Td>
                {mainHeads.slice(4, 13).map(([t]) => <Td key={t} />)}
                <Td $align="right">装饰工程</Td>
              </Tr>
            ))}
            <Tr $h={100} $bg="#a8dbfa">
              <Td $mono $align="center" $bg={FACE}>2</Td>
              <Td>
                <TreeCell $h={99}>
                  <GridGuide $kind="child" />
                  <GridGuide $kind="node"><Minus aria-label="折叠" /></GridGuide>
                  <NodeText>010803001001</NodeText>
                </TreeCell>
              </Td>
              <Td $align="center">项</Td>
              <Td>金属卷帘门</Td>
              {mainHeads.slice(4, 13).map(([t]) => <Td key={t} />)}
              <Td $align="right">装饰工程</Td>
            </Tr>
          </tbody>
        </Table>
      </Viewport>
      <ScrollY>
        <ArrowButton aria-label="上"><Chev d="u" /></ArrowButton>
        <Thumb $h={17} />
        <Fill />
        <ArrowButton aria-label="下"><Chev d="d" /></ArrowButton>
      </ScrollY>
    </GridRow>
    <ScrollX $end={17}>
      <ArrowButton aria-label="左"><Chev d="l" /></ArrowButton>
      <Thumb $w={17} />
      <Fill />
      <ArrowButton aria-label="右"><Chev d="r" /></ArrowButton>
    </ScrollX>
  </GridFrame>
);

const ResourceGrid = () => (
  <GridFrame $grow>
    <GridRow>
      <Viewport>
        <Table $auto>
          <colgroup>{resourceCols.map((w, i) => <col key={i} width={w} />)}</colgroup>
          <thead>
            <tr>{resourceCols.map((_, i) => <Th key={i} $on={i === 1}>{resourceHeads[i] ?? ""}</Th>)}</tr>
          </thead>
          <tbody>
            {resources.map(([code, kind, name, unit, ...nums], r) => (
              <Tr key={r} $h={19}>
                <Td $mono $align="center" $bg={r === 0 ? "#ffd38a" : FACE}>{r + 1}</Td>
                <Td $mono $align="right" $bg={r === 0 ? "#d8eaf9" : undefined}>{code}</Td>
                <Td $align="center">{kind}</Td>
                <Td>{name}</Td>
                <Td />
                <Td $mono>{unit}</Td>
                <Td />
                {[0, 1, 2, 3, 4, 5, 6].map((c) => <Td key={c} $mono $align="right">{nums[c]}</Td>)}
                <Td><Check aria-label={"选择 " + name} /></Td>
                <Td />
              </Tr>
            ))}
          </tbody>
        </Table>
      </Viewport>
      <ScrollY>
        <Fill />
        <ArrowButton aria-label="下"><Chev d="d" /></ArrowButton>
      </ScrollY>
    </GridRow>
    <ScrollX $end={17}>
      <ArrowButton aria-label="左"><Chev d="l" /></ArrowButton>
      <Thumb $w={17} />
      <Fill />
      <ArrowButton aria-label="右"><Chev d="r" /></ArrowButton>
    </ScrollX>
  </GridFrame>
);

const QueryDialog = () => (
  <Dialog role="dialog" aria-label="查询">
    <DialogTitle>
      <TitleLabel><AppIcon />查询</TitleLabel>
      <WindowButtons $gap={34}>
        <button aria-label="最小化"><MinIcon c="#ccc" /></button>
        <button aria-label="最大化"><Ico s={12}><path d="M1.500 1.500h13v13h-13z" stroke="#000" strokeWidth="1.400" /></Ico></button>
        <button aria-label="关闭"><CloseIcon c="#000" /></button>
      </WindowButtons>
    </DialogTitle>
    <DialogBar>
      <TabStrip $top={0} $h={22}>
        <StripTab>清单指引</StripTab><StripLine />
        <StripTab $w={31}>清单</StripTab><StripLine />
        <StripTab $on>定额</StripTab><StripLine />
        <StripTab>人材机</StripTab><StripLine />
        <StripTab>补充人材机</StripTab><StripLine />
      </TabStrip>
      <DialogButtons>
        <PushButton>插入(I)</PushButton>
        <PushButton>替换(R)</PushButton>
      </DialogButtons>
    </DialogBar>
    <DialogBody>
      <QuerySide>
        <Combo>
          <ComboSelect aria-label="定额库"><option>湖北省房屋建筑与装饰工程消耗量定</option></ComboSelect>
          <Chev d="d" c="#777" />
        </Combo>
        <PageTabs>
          <PageTab $on>章节查询</PageTab>
          <PageTab>条件查询</PageTab>
        </PageTabs>
        <Page>
          <SunkBox>
            <GridRow>
              <TreeList>
                {chapters.map(([level, kind, text], i) => (
                  <TreeRow key={i} $on={i === 14}>
                    {Array.from({ length: level }, (_, g) => <Guide key={g} $w={19} />)}
                    {kind === "leaf" || kind === "last" ? (
                      <Branch $w={19} $last={kind === "last"} />
                    ) : (
                      <Toggle aria-label={text}>
                        {kind === "open" ? <Chev d="d" c="#404040" /> : <Chev d="r" c="#a6a6a6" />}
                      </Toggle>
                    )}
                    <span>{text}</span>
                  </TreeRow>
                ))}
              </TreeList>
              <ScrollY>
                <ArrowButton aria-label="上"><Chev d="u" /></ArrowButton>
                <Thumb $h={183} />
                <Fill />
                <ArrowButton aria-label="下"><Chev d="d" /></ArrowButton>
              </ScrollY>
            </GridRow>
            <ScrollX $end={17}>
              <ArrowButton aria-label="左"><Chev d="l" /></ArrowButton>
              <Thumb $w={129} />
              <Fill />
              <ArrowButton aria-label="右"><Chev d="r" /></ArrowButton>
            </ScrollX>
          </SunkBox>
          <RadioRow>
            <RadioLabel><Radio $soft name="scope" />标准</RadioLabel>
            <RadioLabel><Radio $soft name="scope" />补充</RadioLabel>
            <RadioLabel><Radio $soft name="scope" defaultChecked />全部</RadioLabel>
          </RadioRow>
        </Page>
      </QuerySide>
      <GridFrame $grow>
        <Table $auto>
          <colgroup>{quotaHeads.map(([t, w]) => <col key={t} width={w} />)}</colgroup>
          <thead>
            <tr>{quotaHeads.map(([t]) => <Th key={t} $on={t === "名称"}>{t}</Th>)}</tr>
          </thead>
          <tbody>
            {quotas.map(([code, name, unit, a, b], i) => (
              <Tr key={code} $h={19}>
                <Td $mono $align="center" $bg={i === 0 ? "#ffd38a" : FACE}>{i + 1}</Td>
                <Td $mono>{code}</Td>
                <Td $bg={i === 0 ? "#d8eaf9" : undefined}>{name}</Td>
                {unit === "100m" ? <Td $mono>{unit}</Td> : <Td>{unit}</Td>}
                <Td $mono $align="right">{a}</Td>
                <Td $mono $align="right">{b}</Td>
              </Tr>
            ))}
          </tbody>
        </Table>
      </GridFrame>
    </DialogBody>
  </Dialog>
);

const Ime = () => (
  <ImeBar>
    <SogouIcon s={28} />
    <ImeKeys>
      <button>中</button>
      <button aria-label="标点"><Ico><circle cx="4" cy="6" r="2" stroke="#1e76c8" strokeWidth="1.400" /><path d="M11 9h3v3l-2 3h-1l1-3h-1z" fill="#1e76c8" /></Ico></button>
      <button aria-label="语音"><Ico><rect x="5.500" y="0.500" width="5" height="9" rx="2.500" fill="#1e76c8" /><path d="M3 6.500c0 6.500 10 6.500 10 0M8 11.500V15M5 15h6" stroke="#1e76c8" strokeWidth="1.500" /></Ico></button>
      <button aria-label="键盘"><Ico><rect x="0.800" y="2.800" width="14.400" height="10.400" rx="1" stroke="#1e76c8" strokeWidth="1.500" /><path d="M3 6h10M3 8.500h10" stroke="#1e76c8" strokeWidth="1.400" strokeDasharray="1.500 1" /><path d="M4 11h8" stroke="#1e76c8" strokeWidth="1.300" /></Ico></button>
      <button aria-label="用户"><Ico><circle cx="6" cy="4" r="3" fill="#aebccb" /><path d="M0 13c0-7 11-7 11 0z" fill="#aebccb" /><rect x="7.500" y="8.500" width="8" height="6" fill="#fff" stroke="#aebccb" /><path d="M10 10v3M12 10h1.500v3H12z" stroke="#8fa2b5" /></Ico></button>
      <button aria-label="皮肤"><Ico><path d="M5 1.500c1 2 5 2 6 0l4.500 3-2 3.500-1.500-1v8H4V7L2.500 8 .500 4.500z" fill="#1e76c8" /></Ico></button>
      <button aria-label="工具"><Ico><path d="M15 4l-3 2-2-2 2-3C8 0 6.500 3 7.500 5.500L1 12c-1 2 1 4 3 3l6.500-6.500C13 9.500 16 7.500 15 4z" fill="#1e76c8" /></Ico></button>
    </ImeKeys>
  </ImeBar>
);

const SwirlIcon = () => (
  <svg width="24" height="24" viewBox="0 0 24 24" fill="none" aria-hidden="true">
    <path d="M11 3c-4-2-8 0-8 4 0 3 3 4 7 4M21 11c2-4 0-8-4-8-3 0-4 3-4 7M13 21c4 2 8 0 8-4 0-3-3-4-7-4M3 13c-2 4 0 8 4 8 3 0 4-3 4-7" fill="#e8e8e8" stroke="#e8e8e8" strokeWidth="2" />
    <path d="M11 6c1 3 1 4-1 5M18 11c-3 1-4 1-5-1M13 18c-1-3-1-4 1-5M6 13c3-1 4-1 5 1" stroke="#020d10" />
  </svg>
);
const SpiralIcon = () => (
  <svg width="28" height="26" viewBox="0 0 28 26" fill="none" aria-hidden="true">
    <circle cx="10" cy="15" r="8.500" stroke="#a9b0b3" strokeWidth="1.400" />
    <path d="M16 10c-5-4-12 0-11 6s8 7 11 2c2-4-2-7-5-5s-1 5 1 3" stroke="#cfd4d6" strokeWidth="1.400" />
    <path d="M15 11c2-1 1-9 6-9s4 8 6 9z" fill="#e8a90c" /><circle cx="21" cy="12" r="2" fill="#c98a08" />
  </svg>
);
const EdgeIcon = () => (
  <svg width="22" height="22" viewBox="0 0 22 22" fill="none" aria-hidden="true">
    <path d="M1 10C3-2 21-3 21 10v3H8c0 6 8 6 11 3v4C12 24 3 21 4 13c.3-3 3-5 5-6-1 1-1.500 2-1.500 3H15c0-6-10-6-14 0z" fill="#1c7fe0" />
  </svg>
);
const StoreIcon = () => (
  <svg width="24" height="26" viewBox="0 0 24 26" fill="none" aria-hidden="true">
    <path d="M2 7l20 1v16L2 22z" fill="#fff" />
    <path d="M7 8c0-8 9-8 9 0" stroke="#fff" strokeWidth="1.500" />
    <path d="M6 11l5-.5v4.500H6zM12 10.400l6-.7V15h-6zM6 16h5v4.500l-5-.5zM12 16h6v5.300l-6-.7z" fill="#020d10" />
  </svg>
);
const ExplorerIcon = () => (
  <svg width="22" height="20" viewBox="0 0 22 20" fill="none" aria-hidden="true">
    <path d="M0 1h8l2 2h12v16H0z" fill="#f6d36b" /><path d="M0 5h22v14H0z" fill="#ffe9a3" />
    <path d="M4 19v-8h14v8h-4v-4H8v4z" fill="#38a7dd" />
  </svg>
);
const IeIcon = () => (
  <svg width="26" height="26" viewBox="0 0 26 26" fill="none" aria-hidden="true">
    <path d="M21.500 17.500c-3 5.500-14 5-14.500-3.500S20.500 4 21 13.500H8" stroke="#43a5e8" strokeWidth="4" />
    <path d="M3 24C-1 20 14 1 23 2.500c2 .5 1 3.500 0 5 0-2.500-2-3.500-5-2.500C10 8 4.500 16 3.500 20.500c0 1.500 1.500 1.500 3.500.5-1.500 2-3 3-4 3z" fill="#f2c230" />
  </svg>
);
const BlueAppIcon = () => (
  <svg width="24" height="24" viewBox="0 0 24 24" fill="none" aria-hidden="true">
    <rect width="24" height="24" rx="4" fill="#0f8cf0" />
    <path d="M12 5v12c0 2.500-4 3-5 1M10 6.500l2-1.500 2 1.500" stroke="#fff" strokeWidth="2" />
    <path d="M12 11h5c3 0 3 4 0 4-1.500 0-2-.5-2.500-1M12 11H7c-3 0-3 4 0 4" stroke="#fff" strokeWidth="2" />
  </svg>
);
const NoteIcon = () => (
  <svg width="20" height="22" viewBox="0 0 20 22" fill="none" aria-hidden="true">
    <path d="M1 7h8l3 3v11H1z" fill="#fff" /><path d="M3 11h6M3 14h7M3 17h7" stroke="#555" strokeWidth="1.300" />
    <path d="M8 5c0-5 9-5 9 0 0 3-4 3-4 7M13 14v3" stroke="#f7e600" strokeWidth="3" />
  </svg>
);
const WaveIcon = () => (
  <svg width="25" height="25" viewBox="0 0 25 25" fill="none" aria-hidden="true">
    <path d="M24 1c-2 4-4 5-7 5-6 0-10 4-9 9 1 4 7 5 10 2 2-3 0-6-3-5-2 0-3 2-2 3-2-3 0-7 4-7 5 0 7 5 5 9-3 8-15 9-19 2C-2 9 6 0 15 1c3 1 6 1 9 0z" fill="#27a3ee" />
  </svg>
);
const BrowserIcon = () => (
  <svg width="24" height="24" viewBox="0 0 24 24" fill="none" aria-hidden="true">
    <circle cx="12" cy="12" r="10.500" fill="#5cc83b" stroke="#b8eb9f" />
    <path d="M18 15c-2 4-11 4-11-3s10-6 10.500 0H8" stroke="#fff" strokeWidth="2.600" />
  </svg>
);

const Tasks = () => (
  <TaskBar>
    <StartButton aria-label="开始">
      <Ico><path d="M0 2.500l6.500-1v6H0zM7.500 1.300L16 0v7.500H7.500zM0 8.500h6.500v6L0 13.500zM7.500 8.500H16V16l-8.500-1.300z" fill="#fff" /></Ico>
    </StartButton>
    <SearchBox>
      <svg width="22" height="22" fill="none" aria-hidden="true"><circle cx="11" cy="11" r="9" stroke="#fff" strokeWidth="3" /></svg>
      <SearchInput aria-label="搜索" placeholder="在这里输入你要搜索的内容" />
      <Ico><rect x="5.500" y="0.500" width="5" height="10" rx="2.500" stroke="#999" /><path d="M3 6v4c0 3 10 3 10 0V6M8 12.500v3M5 15.500h6" stroke="#999" /></Ico>
    </SearchBox>
    <TaskButton $w={48} aria-label="任务视图">
      <svg width="20" height="16" fill="none" aria-hidden="true"><path d="M4.500 1.500h11v13h-11zM3 3.500H.500v9H3M17 3.500h2.500v9H17" stroke="#fff" strokeWidth="1.300" /></svg>
    </TaskButton>
    <TaskButton $w={51} aria-label="应用"><SwirlIcon /></TaskButton>
    <TaskButton $w={51} aria-label="提醒"><SpiralIcon /></TaskButton>
    <TaskButton $w={51} aria-label="浏览器"><EdgeIcon /></TaskButton>
    <TaskButton $w={47} aria-label="商店"><StoreIcon /></TaskButton>
    <TaskButton $w={47} aria-label="文件"><ExplorerIcon /></TaskButton>
    <TaskButton $w={47} aria-label="网络"><IeIcon /></TaskButton>
    <TaskButton $w={47} $open aria-label="设计"><BlueAppIcon /></TaskButton>
    <TaskButton $w={47} $open aria-label="帮助"><NoteIcon /></TaskButton>
    <TaskButton $w={47} $open $active aria-label="计价软件"><AppIcon s={24} /></TaskButton>
    <TaskButton $w={47} $open aria-label="广联达"><WaveIcon /></TaskButton>
    <TaskButton $w={47} $open aria-label="安全浏览器"><BrowserIcon /></TaskButton>
    <CpuMeter>27%<br />CPU使用</CpuMeter>
    <TrayButton $w={24} aria-label="更多"><Ico s={12}><path d="M1 12l7-7 7 7" stroke="#fff" strokeWidth="1.500" /></Ico></TrayButton>
    <TrayButton $w={25} aria-label="电源"><Ico><path d="M5.500 4.500h9v8h-9z" stroke="#fff" strokeWidth="1.200" /><path d="M7 6h6v5H7z" fill="#fff" /><path d="M0 5h5v3c-2 2-4 1-4-1V3m3 0v2M15.500 7v3" stroke="#fff" strokeWidth="1.200" /></Ico></TrayButton>
    <TrayButton $w={23} aria-label="网络状态"><Ico s={14}><path d="M1 15C1 7 7 1 15 1M5 15C5 9 9 5 15 5M9 15c0-3 3-6 6-6" stroke="#bbb" strokeWidth="1.500" /><circle cx="13.500" cy="13.500" r="2" fill="#fff" /></Ico></TrayButton>
    <TrayButton $w={23} aria-label="音量"><Ico><path d="M1 5.500h3l4-3.500v12L4 10.500H1z" stroke="#fff" /><path d="M10 6c1 1 1 3 0 4M12 4c2 2 2 6 0 8" stroke="#fff" /><path d="M14 2c3 3 3 9 0 12" stroke="#777" /></Ico></TrayButton>
    <TrayButton $w={32} aria-label="触摸键盘"><svg width="23" height="14" fill="none" aria-hidden="true"><rect x="0.500" y="0.500" width="22" height="12" stroke="#fff" /><path d="M3 4h17M3 6.500h17" stroke="#fff" strokeDasharray="1.500 1.500" /><path d="M5 9.500h13" stroke="#fff" /></svg></TrayButton>
    <TrayButton $w={24}>中</TrayButton>
    <TrayButton $w={34} aria-label="输入法"><SogouIcon s={19} /></TrayButton>
    <Clock>22:10<br />2017/10/24</Clock>
    <TrayEnd>
      <TrayButton $w={44} aria-label="通知"><Ico><path d="M.500 1.500h15v11H10l-2 2.500-2-2.500H.500z" stroke="#fff" strokeWidth="1.200" /></Ico></TrayButton>
    </TrayEnd>
  </TaskBar>
);

const IconTools = ({ items }: { items: [string, React.ReactNode][] }) => (
  <>{items.map(([label, icon]) => <Tool key={label} label={label}>{icon}</Tool>)}</>
);
const ImeRoom = styled.span`
  width: 174px;
`;
const EditBar = styled(ToolBar)`
  height: 27px;
  padding-left: 4px;
`;

export default function App() {
  return (
    <Screen>
      <Global />
      <TitleBar>
        <AppIcon />
        <TitleText>
          广联达计价软件 GBQ4.0 - [招标管理 - 单位工程:恒安孝感公司2#仓库改造工程&gt;恒安孝感公司2#仓库改造工程&gt;恒安孝感公司2#仓库改造工程-土建部分 - C:\Users\Administrator.PC-20141127NRHM\Desktop\恒安孝感公...
        </TitleText>
        <WindowButtons $gap={33}>
          <button aria-label="最小化"><MinIcon c="#888" /></button>
          <button aria-label="还原"><RestoreIcon c="#888" /></button>
          <button aria-label="关闭"><CloseIcon c="#888" /></button>
        </WindowButtons>
      </TitleBar>
      <MenuBar>
        <AppIcon />
        {menus.map((m) => <MenuItem key={m}>{m}</MenuItem>)}
        <MenuItem><HelpIcon />帮助(H)</MenuItem>
        <MenuItem><PayIcon />计量支付</MenuItem>
        <Fill />
        <WindowButtons $gap={7}>
          <button aria-label="最小化子窗口"><Ico s={12}><path d="M5 13h7" stroke="#000" strokeWidth="2.500" /></Ico></button>
          <button aria-label="还原子窗口"><RestoreIcon c="#000" w={1.8} /></button>
          <button aria-label="关闭子窗口"><Ico s={12}><path d="M3 3l10 10M13 3L3 13" stroke="#000" strokeWidth="2.400" /></Ico></button>
        </WindowButtons>
      </MenuBar>
      <ToolBar>
        <Group>
          <Grip />
          <IconTools items={[["新建", <NewIcon />], ["新建工程", <BuildingIcon />], ["打开", <OpenIcon />]]} />
          <CaretButton aria-label="打开列表"><Caret /></CaretButton>
          <IconTools items={[["保存", <SaveIcon />], ["目录", <FolderIcon />]]} />
        </Group>
        <Group>
          <Grip />
          <IconTools items={[["剪切", <CutIcon />], ["复制", <CopyIcon />], ["粘贴", <PasteIcon />], ["删除", <CrossIcon />]]} />
          <Divider />
          <Tool label="撤销"><UndoIcon /></Tool>
          <CaretButton aria-label="撤销列表"><Caret /></CaretButton>
          <Tool label="重做"><UndoIcon c="#c4c4c4" flip /></Tool>
          <CaretButton $off aria-label="重做列表"><Caret /></CaretButton>
        </Group>
        <Group>
          <Grip />
          <TextButton><TableIcon />单位工程自检</TextButton>
          <TextButton><BudgetIcon />预算书设置</TextButton>
          <Divider />
          <TextButton $on><PanelIcon />属性窗口</TextButton>
          <Divider />
          <TextButton><PlansIcon />多方案报价</TextButton>
          <CaretButton aria-label="报价列表"><Caret /></CaretButton>
          <TextButton><FeeIcon />费用查看</TextButton>
          <CheckLabel><Check $light />局部汇总</CheckLabel>
        </Group>
        <Group>
          <Grip />
          <IconTools items={[
            ["首条", <NavIcon d="M3 2h2v12H3zM13 2v12L6 8z" />], ["上条", <NavIcon d="M12 2v12L5 8z" />],
            ["下条", <NavIcon d="M5 2v12l7-6z" />], ["末条", <NavIcon d="M3 2v12l7-6zM11 2h2v12h-2z" />],
          ]} />
        </Group>
        <Group>
          <Grip />
          <IconTools items={[
            ["左移", <ArrowIcon r={-90} />], ["右移", <ArrowIcon r={90} />],
            ["上移", <ArrowIcon r={0} />], ["下移", <ArrowIcon r={180} />],
          ]} />
        </Group>
        <Group>
          <Grip />
          <IconTools items={[
            ["计算器", <CalcIcon />], ["函数", <FxIcon />], ["段落", <PilcrowIcon />],
            ["立方", <CubeIcon />], ["查找", <FindTableIcon />], ["列表", <ListIcon />],
          ]} />
          <Divider />
          <TextButton>返回项目管理</TextButton>
        </Group>
      </ToolBar>
      <Workspace>
        <LeftSide />
        <Content>
          <EditBar>
            <Group>
              <Grip />
              <MenuButton>插入<Caret /></MenuButton>
              <MenuButton>添加<Caret /></MenuButton>
              <MenuButton $tight>补充<Caret /></MenuButton>
              <MenuButton>查询<Caret /></MenuButton>
              <MenuButton>存档<Caret /></MenuButton>
              <Tool label="查找"><Binoculars /></Tool>
              <Divider />
              <MenuButton $tight>整理清单<Caret /></MenuButton>
              <MenuButton>安装费用<Caret /></MenuButton>
              <MenuButton>单价构成<Caret /></MenuButton>
              <MenuButton>批量换算<Caret /></MenuButton>
            </Group>
            <ImeRoom />
            <Group>
              <TextButton $on><LockIcon />解除清单锁定</TextButton>
              <Tool label="填充"><BucketIcon /></Tool>
              <CaretButton aria-label="颜色列表"><Caret /></CaretButton>
              <Divider />
              <Tool label="上移清单"><ArrowIcon r={0} c="#3d78dc" /></Tool>
              <Tool label="下移清单"><ArrowIcon r={180} c="#3d78dc" /></Tool>
              <TextButton $off><ExtractIcon />提取图形工程量</TextButton>
            </Group>
          </EditBar>
          <MainGrid />
          <Lower>
            <LowerLeft>
              <TabStrip $top={7} $h={31}>
                <StripTab $on>工料机显示</StripTab><StripLine />
                <StripTab>查看单价构成</StripTab><StripLine />
                <StripTab>标准换算</StripTab><StripLine />
              </TabStrip>
              <ResourceGrid />
            </LowerLeft>
            <RightPanel>
              <PushButton>插入</PushButton>
              <PushButton>添加</PushButton>
              <PushButton>删除</PushButton>
              <PushButton>查询</PushButton>
              <PushButton $wide>补充</PushButton>
              <PushButton $wide>材料价格查询</PushButton>
              <FilterBox>
                <legend>过滤条件</legend>
                {["人工", "机械", "材料", "设备", "主材", "所有"].map((t) => (
                  <RadioLabel key={t}><Radio name="filter" defaultChecked={t === "所有"} />{t}</RadioLabel>
                ))}
              </FilterBox>
            </RightPanel>
          </Lower>
        </Content>
      </Workspace>
      <StatusBar>
        {statuses.map(([t, w]) => <StatusCell key={t} $grow={w}>{t}</StatusCell>)}
      </StatusBar>
      <Tasks />
      <SideScroll>
        <SmallArrow aria-label="上翻"><Ico s={10}><path d="M8 2l6 6h-4v6H6V8H2z" fill="#888" /></Ico></SmallArrow>
        <SmallArrow aria-label="下翻"><Ico s={10}><path d="M8 14l6-6h-4V2H6v6H2z" fill="#000" /></Ico></SmallArrow>
      </SideScroll>
      <QueryDialog />
      <Ime />
      <Ball>65</Ball>
      <Marks width="1000" height="520" fill="none" aria-hidden="true">
        <ellipse cx="780" cy="302" rx="188" ry="34" stroke="#f00" strokeWidth="3" />
        <ellipse cx="559" cy="468" rx="80" ry="21" stroke="#f00" strokeWidth="3" />
      </Marks>
    </Screen>
  );
}
